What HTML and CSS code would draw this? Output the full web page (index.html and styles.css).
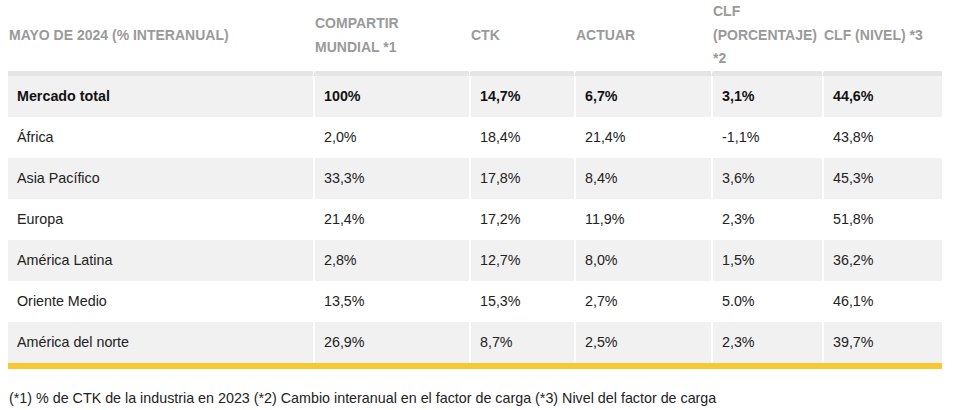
FILE: index.html
```html
<!DOCTYPE html>
<html lang="es">
<head>
<meta charset="utf-8">
<title>Mayo de 2024</title>
<link rel="stylesheet" href="styles.css">
</head>
<body>
<div class="wrap">
  <table class="data">
    <colgroup>
      <col class="c1"><col class="c2"><col class="c3"><col class="c4"><col class="c5"><col class="c6">
    </colgroup>
    <thead>
      <tr>
        <th>MAYO DE 2024 (% INTERANUAL)</th>
        <th>COMPARTIR MUNDIAL *1</th>
        <th>CTK</th>
        <th>ACTUAR</th>
        <th>CLF (PORCENTAJE) *2</th>
        <th>CLF (NIVEL) *3</th>
      </tr>
    </thead>
    <tbody>
      <tr class="total alt"><td>Mercado total</td><td>100%</td><td>14,7%</td><td>6,7%</td><td>3,1%</td><td>44,6%</td></tr>
      <tr><td>África</td><td>2,0%</td><td>18,4%</td><td>21,4%</td><td>-1,1%</td><td>43,8%</td></tr>
      <tr class="alt"><td>Asia Pacífico</td><td>33,3%</td><td>17,8%</td><td>8,4%</td><td>3,6%</td><td>45,3%</td></tr>
      <tr><td>Europa</td><td>21,4%</td><td>17,2%</td><td>11,9%</td><td>2,3%</td><td>51,8%</td></tr>
      <tr class="alt"><td>América Latina</td><td>2,8%</td><td>12,7%</td><td>8,0%</td><td>1,5%</td><td>36,2%</td></tr>
      <tr><td>Oriente Medio</td><td>13,5%</td><td>15,3%</td><td>2,7%</td><td>5.0%</td><td>46,1%</td></tr>
      <tr class="alt"><td>América del norte</td><td>26,9%</td><td>8,7%</td><td>2,5%</td><td>2,3%</td><td>39,7%</td></tr>
    </tbody>
  </table>
  <p class="note">(*1) % de CTK de la industria en 2023 (*2) Cambio interanual en el factor de carga (*3) Nivel del factor de carga</p>
</div>
</body>
</html>
```
FILE: styles.css
```css
html, body {
  margin: 0;
  padding: 0;
  background: #ffffff;
}
body {
  font-family: "Liberation Sans", Arial, sans-serif;
  color: #222222;
}
.wrap {
  padding: 0 15px 0 8px;
}
.data {
  width: 934px;
  border-collapse: separate;
  border-spacing: 0;
  table-layout: fixed;
  border-bottom: 6px solid #f8c833;
}
.c1 { width: 305px; }
.c2 { width: 156px; }
.c3 { width: 105px; }
.c4 { width: 137px; }
.c5 { width: 111px; }
.c6 { width: 120px; }

.data th {
  text-align: left;
  vertical-align: middle;
  font-size: 14px;
  font-weight: bold;
  color: #9a9a9a;
  line-height: 23.7px;
  padding: 0 5px 0 1px;
  border-bottom: 5px solid #e5e5e5;
}
.data th + th {
  border-left: 2px solid #ffffff;
  padding-left: 0;
}
.data td {
  font-size: 14.3px;
  line-height: 21px;
  padding: 10px 8px 10px 9px;
}
.data td + td {
  border-left: 2px solid #ffffff;
}
.data tr.alt td {
  background: #f1f1f1;
}
.data tr.total td {
  font-weight: bold;
  color: #111111;
}
.note {
  margin: 19px 0 0 1px;
  font-size: 14.3px;
  line-height: 20px;
  color: #222222;
}
```
